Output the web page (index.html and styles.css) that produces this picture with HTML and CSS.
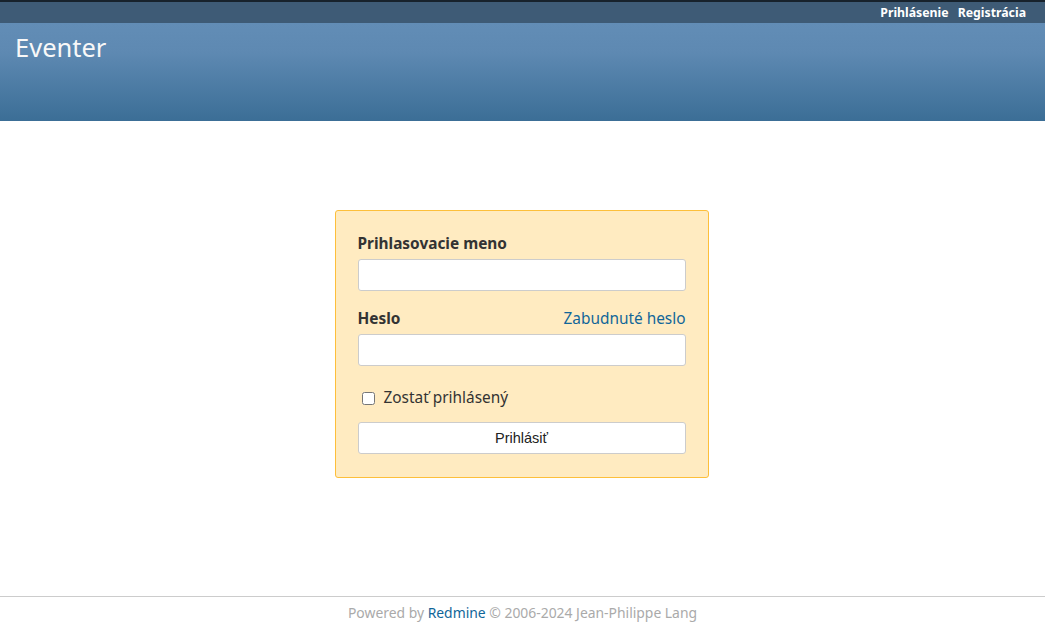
FILE: index.html
```html
<!DOCTYPE html>
<html lang="sk">
<head>
<meta charset="utf-8">
<title>Eventer</title>
<link rel="stylesheet" href="styles.css">
</head>
<body>
<div class="page">
  <div class="top-menu">
    <a href="#" class="top-link">Prihlásenie</a>
    <a href="#" class="top-link">Registrácia</a>
  </div>
  <div class="header">
    <h1 class="title">Eventer</h1>
  </div>
  <main class="main">
    <form class="login-box">
      <label class="field-label" for="username">Prihlasovacie meno</label>
      <input class="text-input" id="username" type="text">
      <div class="label-row">
        <label class="field-label" for="password">Heslo</label>
        <a href="#" class="link">Zabudnuté heslo</a>
      </div>
      <input class="text-input" id="password" type="password">
      <label class="autologin"><input type="checkbox" class="check"> Zostať prihlásený</label>
      <button type="button" class="submit">Prihlásiť</button>
    </form>
  </main>
  <footer class="footer">
    <p class="footer-text">Powered by <a href="#" class="link">Redmine</a> © 2006-2024 Jean-Philippe Lang</p>
  </footer>
</div>
</body>
</html>
```
FILE: styles.css
```css
html, body {
  margin: 0;
  padding: 0;
}
body {
  font-family: "Noto Sans", "Open Sans", sans-serif;
  color: #333;
  background: #fff;
}
.page {
  display: flex;
  flex-direction: column;
  min-height: 100vh;
}
.top-menu {
  border-top: 2px solid #17222c;
  background: #3e5b76;
  height: 21px;
  display: flex;
  justify-content: flex-end;
  align-items: center;
  gap: 9px;
  padding-right: 19px;
  font-size: 12.3px;
  font-weight: bold;
}
.top-link {
  color: #fff;
  text-decoration: none;
}
.header {
  height: 98px;
  background: linear-gradient(to bottom, #628db6 0%, #5e89b2 30%, #3b6e96 100%);
  padding: 0 15px;
  box-sizing: border-box;
}
.title {
  margin: 0;
  padding-top: 9px;
  font-size: 25.5px;
  font-weight: normal;
  line-height: 30px;
  color: #f8f8f8;
}
.main {
  flex: 1;
  display: flex;
  justify-content: center;
  align-items: flex-start;
  padding-top: 89px;
  padding-right: 2px;
}
.login-box {
  width: 328px;
  padding: 22px 22px 23px;
  background: #ffebc1;
  border: 1px solid #fdbf3b;
  border-radius: 3px;
  display: flex;
  flex-direction: column;
}
.field-label {
  font-size: 15.4px;
  font-weight: bold;
  line-height: 22px;
  color: #333;
  margin-bottom: 4px;
}
.label-row {
  display: flex;
  justify-content: space-between;
  align-items: baseline;
  margin-top: 17px;
}
.label-row .link {
  font-size: 15.4px;
  line-height: 22px;
}
.link {
  color: #169;
  text-decoration: none;
}
.text-input {
  height: 32px;
  box-sizing: border-box;
  border: 1px solid #ccc;
  border-radius: 3px;
  background: #fff;
  margin: 0;
  padding: 2px 6px;
}
.autologin {
  margin-top: 22px;
  font-size: 15.4px;
  line-height: 20px;
  display: flex;
  align-items: center;
  color: #333;
}
.check {
  width: 13px;
  height: 13px;
  margin: 0 9px 0 4px;
}
.submit {
  margin-top: 14px;
  height: 32px;
  border: 1px solid #ccc;
  border-radius: 3px;
  background: #fff;
  font-family: "Liberation Sans", Arial, sans-serif;
  font-size: 14.5px;
  color: #222;
}
.footer {
  border-top: 1px solid #ccc;
  height: 27px;
}
.footer-text {
  margin: 0;
  text-align: center;
  font-size: 13.9px;
  line-height: 32px;
  color: #aaa;
}
```
